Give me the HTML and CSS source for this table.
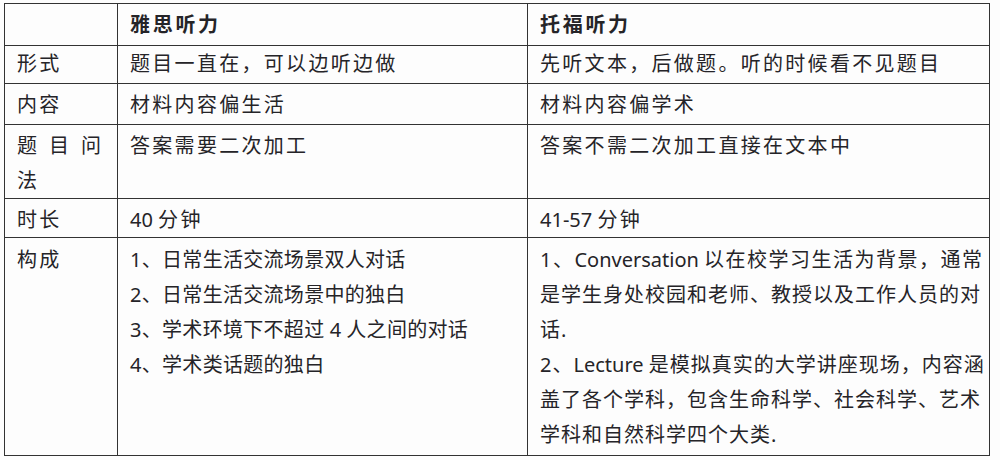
FILE: index.html
```html
<!DOCTYPE html>
<html lang="zh-CN">
<head>
<meta charset="utf-8">
<title>雅思听力 vs 托福听力</title>
<link rel="stylesheet" href="styles.css">
</head>
<body>
<table class="cmp">
  <colgroup>
    <col class="c1"><col class="c2"><col class="c3">
  </colgroup>
  <thead>
    <tr class="r-head">
      <th></th>
      <th>雅思听力</th>
      <th>托福听力</th>
    </tr>
  </thead>
  <tbody>
    <tr class="r-form">
      <td>形式</td>
      <td>题目一直在，可以边听边做</td>
      <td>先听文本，后做题。听的时候看不见题目</td>
    </tr>
    <tr class="r-content">
      <td>内容</td>
      <td>材料内容偏生活</td>
      <td>材料内容偏学术</td>
    </tr>
    <tr class="r-ask">
      <td><span class="spread"><span>题</span><span>目</span><span>问</span></span>法</td>
      <td>答案需要二次加工</td>
      <td>答案不需二次加工直接在文本中</td>
    </tr>
    <tr class="r-time">
      <td>时长</td>
      <td><span class="lat">40 </span>分钟</td>
      <td><span class="lat">41-57 </span>分钟</td>
    </tr>
    <tr class="r-comp">
      <td>构成</td>
      <td class="tight">1、日常生活交流场景双人对话<br>2、日常生活交流场景中的独白<br>3、学术环境下不超过<span class="lat"> 4 </span>人之间的对话<br>4、学术类话题的独白</td>
      <td class="narrow"><span class="ln">1、<span class="lat">Conversation </span>以在校学习生活为背景，通常</span><br>是学生身处校园和老师、教授以及工作人员的对<br>话<span class="lat">.</span><br>2、<span class="lat">Lecture </span>是模拟真实的大学讲座现场，内容涵<br>盖了各个学科，包含生命科学、社会科学、艺术<br>学科和自然科学四个大类<span class="lat">.</span></td>
    </tr>
  </tbody>
</table>
</body>
</html>
```

FILE: styles.css
```css
html, body {
  margin: 0;
  padding: 0;
  background: #fdfdfd;
}

body {
  padding: 3px 0 0 4px;
  font-family: "Noto Sans", "Noto Sans CJK SC", sans-serif;
  color: #252428;
}

.cmp {
  width: 985px;
  table-layout: fixed;
  border-collapse: collapse;
  border: 1px solid #333;
  font-size: 20px;
  line-height: 35px;
  letter-spacing: 2.3px;
}

.c1 { width: 113px; }
.c2 { width: 410px; }
.c3 { width: 462px; }

.cmp th,
.cmp td {
  border: 1px solid #333;
  padding: 3px 2px 0 12px;
  vertical-align: top;
  text-align: left;
  white-space: nowrap;
}

.cmp th {
  font-weight: 700;
  letter-spacing: 2.7px;
}

.r-head { height: 42px; }
.r-form { height: 38px; }
.r-form td { padding-top: 0; }
.r-content { height: 41px; }
.r-ask { height: 74px; }
.r-time { height: 39px; }
.r-comp { height: 218px; }
.r-comp td { padding-top: 4px; }

.cmp .lat {
  letter-spacing: 0;
}

.spread {
  display: flex;
  justify-content: space-between;
  width: 84px;
  letter-spacing: 0;
}

.cmp td.tight {
  letter-spacing: 0.3px;
}

.cmp td.narrow {
  letter-spacing: 1px;
}

.cmp td.narrow .ln {
  letter-spacing: 1.5px;
}
```
